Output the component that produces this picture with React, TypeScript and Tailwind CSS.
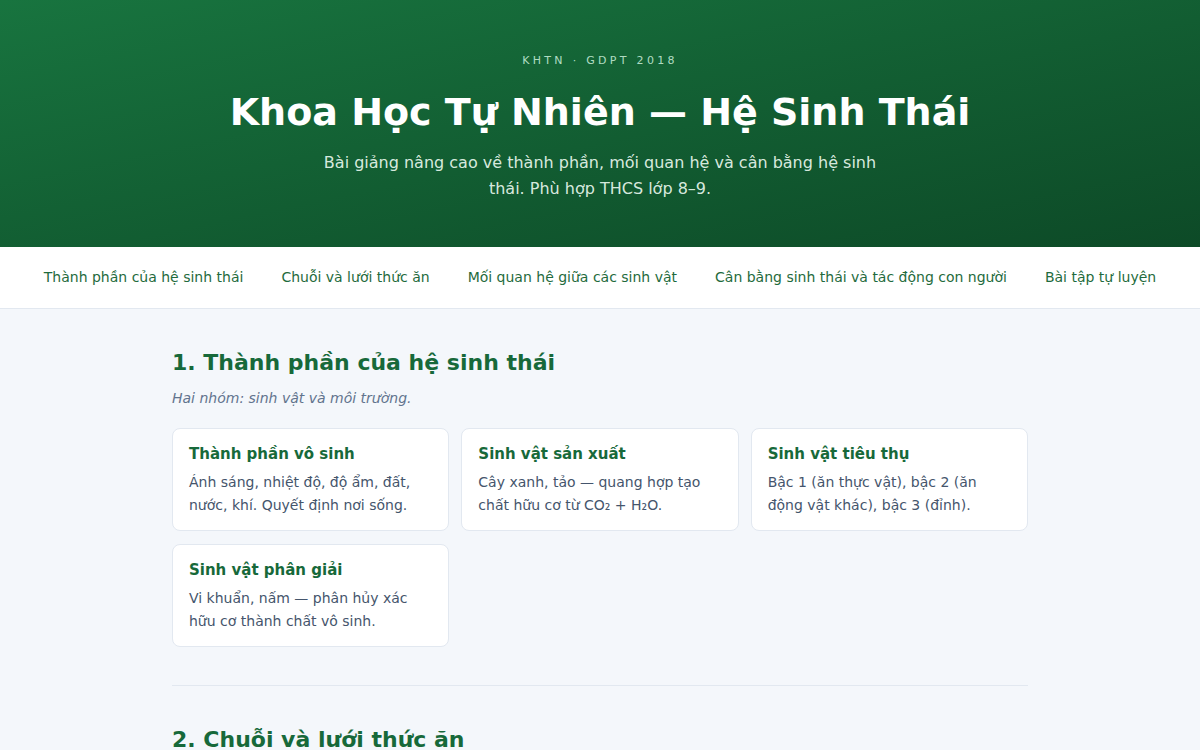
import React from 'react';

const navItems = [
  'Thành phần của hệ sinh thái',
  'Chuỗi và lưới thức ăn',
  'Mối quan hệ giữa các sinh vật',
  'Cân bằng sinh thái và tác động con người',
  'Bài tập tự luyện',
];

const components = [
  { title: 'Thành phần vô sinh', body: 'Ánh sáng, nhiệt độ, độ ẩm, đất, nước, khí. Quyết định nơi sống.' },
  { title: 'Sinh vật sản xuất', body: 'Cây xanh, tảo — quang hợp tạo chất hữu cơ từ CO₂ + H₂O.' },
  { title: 'Sinh vật tiêu thụ', body: 'Bậc 1 (ăn thực vật), bậc 2 (ăn động vật khác), bậc 3 (đỉnh).' },
  { title: 'Sinh vật phân giải', body: 'Vi khuẩn, nấm — phân hủy xác hữu cơ thành chất vô sinh.' },
];

export default function App() {
  return (
    <div className="min-h-screen bg-[#f4f7fb] font-['DejaVu_Sans',sans-serif]">
      {/* Hero */}
      <header className="bg-gradient-to-br from-[#18743f] to-[#0d4a27] px-6 pt-[53px] pb-[45px] text-center text-white">
        <div className="text-[11px] tracking-[0.3em] text-green-100/80">KHTN · GDPT 2018</div>
        <h1 className="mt-[18px] text-[38px] leading-[48px] font-bold">Khoa Học Tự Nhiên — Hệ Sinh Thái</h1>
        <p className="mx-auto mt-[14px] max-w-[570px] text-base leading-[26px] text-green-50/90">
          Bài giảng nâng cao về thành phần, mối quan hệ và cân bằng hệ sinh thái. Phù hợp THCS lớp 8–9.
        </p>
      </header>

      {/* Nav */}
      <nav className="flex h-[62px] items-center justify-center gap-[38px] border-b border-slate-200 bg-white">
        {navItems.map((item) => (
          <a key={item} href="#" className="text-sm text-[#1f6b3d] hover:underline">
            {item}
          </a>
        ))}
      </nav>

      <main className="mx-auto max-w-[856px] pt-[38px]">
        <section>
          <h2 className="text-[22px] leading-8 font-bold text-[#17693a]">1. Thành phần của hệ sinh thái</h2>
          <p className="mt-[9px] text-sm italic text-slate-500">Hai nhóm: sinh vật và môi trường.</p>
          <div className="mt-[20px] grid grid-cols-3 gap-x-3 gap-y-[13px]">
            {components.map((c) => (
              <div key={c.title} className="rounded-lg border border-slate-200 bg-white px-4 pt-[13px] pb-[13px]">
                <h3 className="text-[15px] leading-6 font-bold text-[#17693a]">{c.title}</h3>
                <p className="mt-[5px] text-sm leading-[23px] text-slate-600">{c.body}</p>
              </div>
            ))}
          </div>
        </section>

        <hr className="mt-[38px] border-slate-200" />

        <section className="pt-[38px]">
          <h2 className="text-[22px] leading-8 font-bold text-[#17693a]">2. Chuỗi và lưới thức ăn</h2>
        </section>
      </main>
    </div>
  );
}
